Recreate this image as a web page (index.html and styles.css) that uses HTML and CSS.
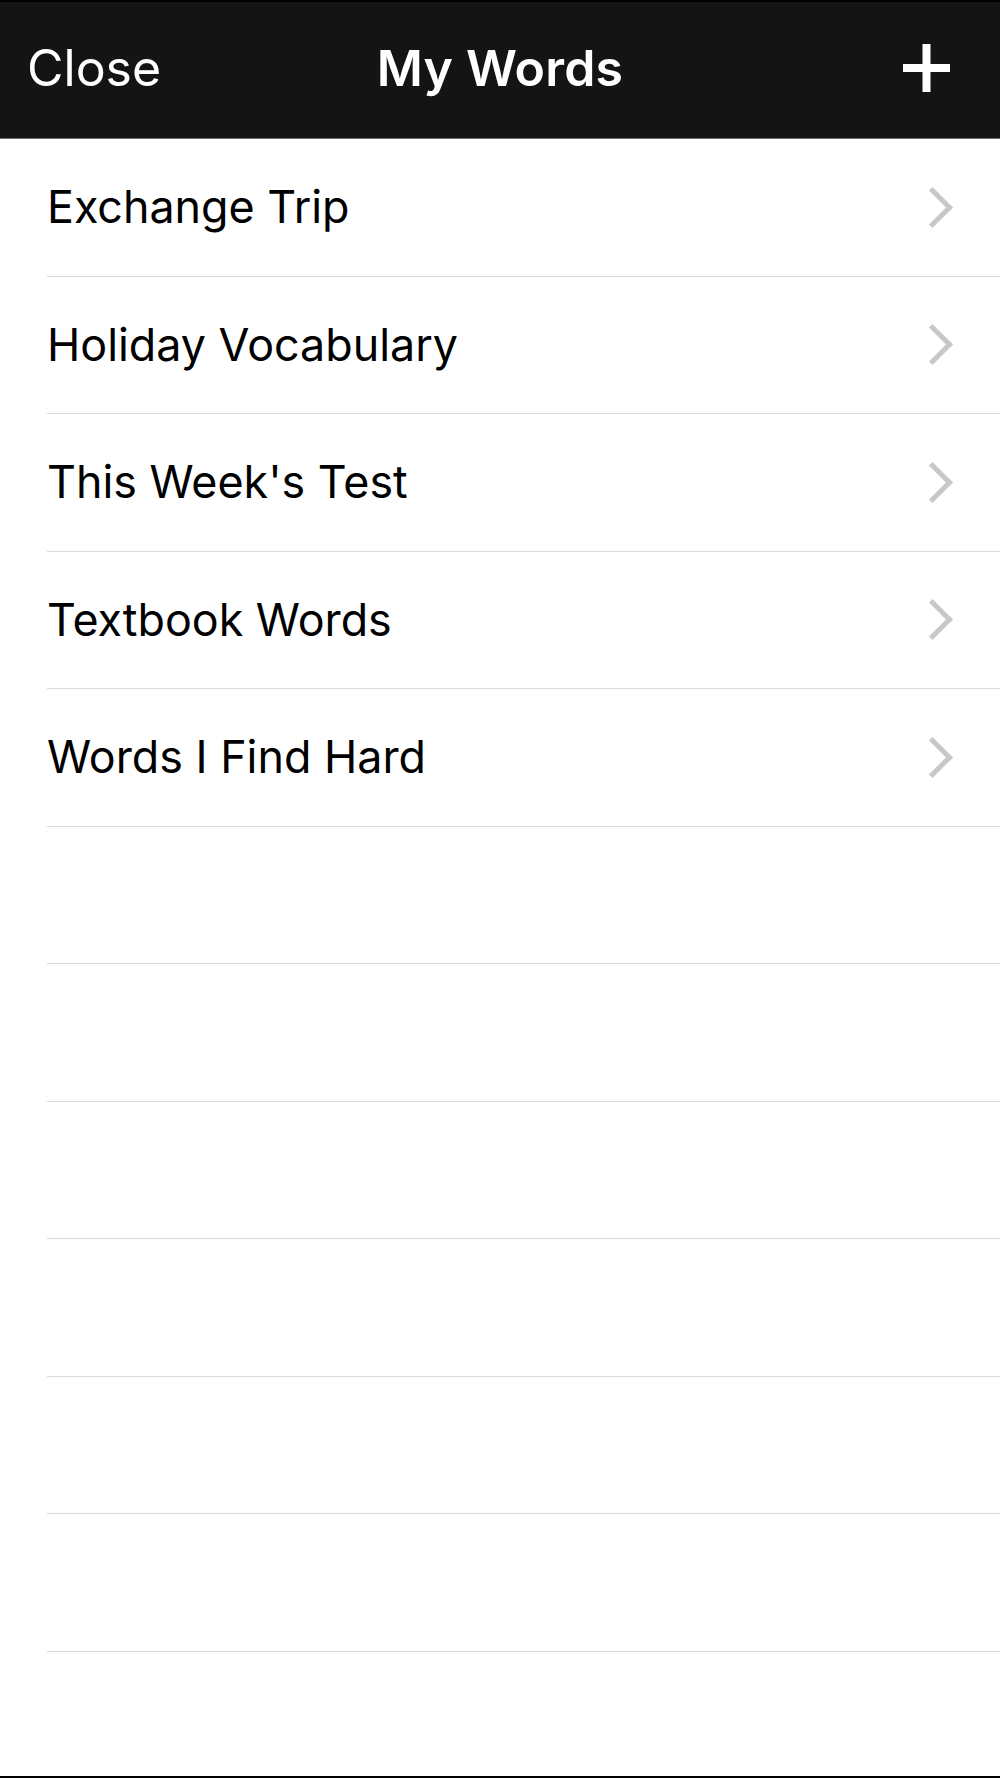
FILE: index.html
```html
<!DOCTYPE html>
<html lang="en">
<head>
  <meta charset="UTF-8" />
  <meta name="viewport" content="width=device-width, initial-scale=1" />
  <title>My Words</title>
  <link rel="stylesheet" href="styles.css">
</head>
<body>
  <div class="screen">
    <header class="navbar">
      <span class="nav-left">Close</span>
      <h1 class="nav-title">My Words</h1>
      <span class="nav-right">
        <svg class="plus" width="47" height="48" viewBox="0 0 47 48">
          <rect x="19.5" y="0" width="8" height="48" fill="#fff"/>
          <rect x="0" y="20" width="47" height="8" fill="#fff"/>
        </svg>
      </span>
    </header>

    <ul class="list">
      <li class="row"><span class="label">Exchange Trip</span><span class="chevron"></span></li>
      <li class="row"><span class="label">Holiday Vocabulary</span><span class="chevron"></span></li>
      <li class="row"><span class="label">This Week's Test</span><span class="chevron"></span></li>
      <li class="row"><span class="label">Textbook Words</span><span class="chevron"></span></li>
      <li class="row"><span class="label">Words I Find Hard</span><span class="chevron"></span></li>
      <li class="row"></li>
      <li class="row"></li>
      <li class="row"></li>
      <li class="row"></li>
      <li class="row"></li>
      <li class="row"></li>
    </ul>
  </div>
</body>
</html>
```

FILE: styles.css
```css
html, body {
  margin: 0;
  padding: 0;
  background-color: #fff;
}
body {
  font-family: Inter, 'Noto Sans', sans-serif;
  color: #000;
}
.screen {
  height: 1778px;
  box-sizing: border-box;
  border-bottom: 2px solid #000;
  overflow: hidden;
}
.navbar {
  height: 139px;
  box-sizing: border-box;
  background-color: #141414;
  border-top: 2px solid #000;
  border-bottom: 1px solid #6e6e6e;
  display: flex;
  align-items: center;
  justify-content: space-between;
  padding: 0 50px 4px 27px;
  position: relative;
  color: #fff;
}
.nav-left {
  font-size: 50px;
}
.nav-title {
  position: absolute;
  left: 0;
  right: 0;
  text-align: center;
  margin: 0;
  font-size: 50px;
  font-weight: 600;
  letter-spacing: 0.2px;
  pointer-events: none;
}
.nav-right {
  display: flex;
  align-items: center;
}
.plus {
  display: block;
}
.list {
  list-style: none;
  margin: 0;
  padding: 0 0 0 47px;
}
.row {
  height: 137.5px;
  box-sizing: border-box;
  border-bottom: 1px solid #d9d9dc;
  display: flex;
  align-items: center;
  justify-content: space-between;
  padding: 0 51px 0 0;
}
.label {
  font-size: 44.8px;
}
.chevron {
  width: 24px;
  height: 24px;
  border-top: 5px solid #c7c7cc;
  border-right: 5px solid #c7c7cc;
  transform: rotate(45deg);
  margin-right: 2px;
}
```
